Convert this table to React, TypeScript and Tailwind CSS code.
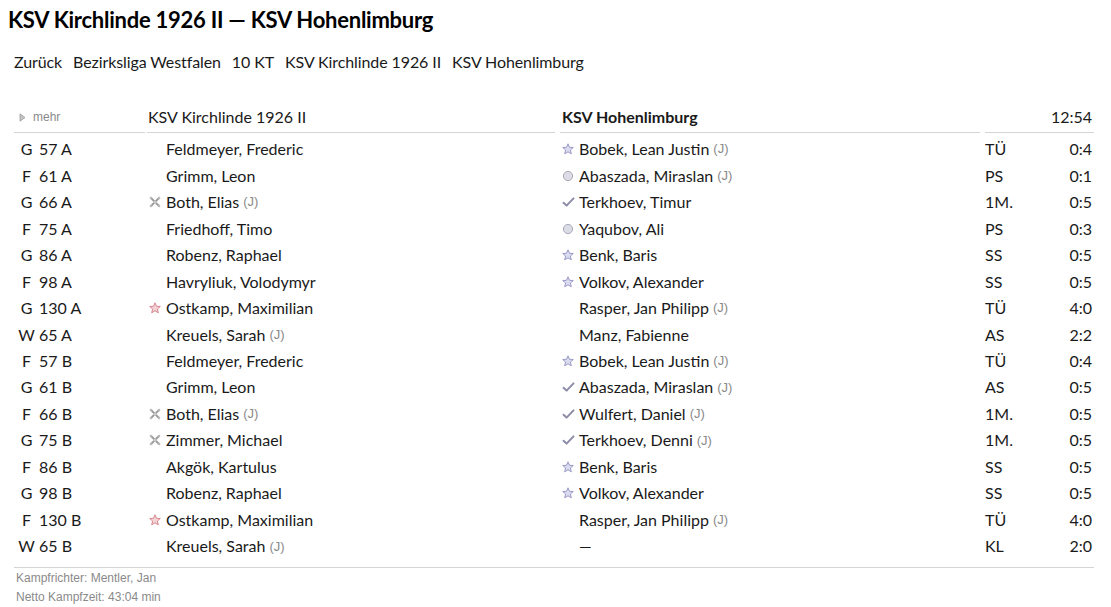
import React from "react";

type Mark = "star" | "starRed" | "circle" | "check" | "cross" | null;

type Bout = {
	style: string;
	weight: string;
	home: string;
	homeJ?: boolean;
	homeMark?: Mark;
	guest: string;
	guestJ?: boolean;
	guestMark?: Mark;
	kind: string;
	score: string;
};

const bouts: Bout[] = [
	{ style: "G", weight: "57 A", home: "Feldmeyer, Frederic", guest: "Bobek, Lean Justin", guestJ: true, guestMark: "star", kind: "TÜ", score: "0:4" },
	{ style: "F", weight: "61 A", home: "Grimm, Leon", guest: "Abaszada, Miraslan", guestJ: true, guestMark: "circle", kind: "PS", score: "0:1" },
	{ style: "G", weight: "66 A", home: "Both, Elias", homeJ: true, homeMark: "cross", guest: "Terkhoev, Timur", guestMark: "check", kind: "1M.", score: "0:5" },
	{ style: "F", weight: "75 A", home: "Friedhoff, Timo", guest: "Yaqubov, Ali", guestMark: "circle", kind: "PS", score: "0:3" },
	{ style: "G", weight: "86 A", home: "Robenz, Raphael", guest: "Benk, Baris", guestMark: "star", kind: "SS", score: "0:5" },
	{ style: "F", weight: "98 A", home: "Havryliuk, Volodymyr", guest: "Volkov, Alexander", guestMark: "star", kind: "SS", score: "0:5" },
	{ style: "G", weight: "130 A", home: "Ostkamp, Maximilian", homeMark: "starRed", guest: "Rasper, Jan Philipp", guestJ: true, kind: "TÜ", score: "4:0" },
	{ style: "W", weight: "65 A", home: "Kreuels, Sarah", homeJ: true, guest: "Manz, Fabienne", kind: "AS", score: "2:2" },
	{ style: "F", weight: "57 B", home: "Feldmeyer, Frederic", guest: "Bobek, Lean Justin", guestJ: true, guestMark: "star", kind: "TÜ", score: "0:4" },
	{ style: "G", weight: "61 B", home: "Grimm, Leon", guest: "Abaszada, Miraslan", guestJ: true, guestMark: "check", kind: "AS", score: "0:5" },
	{ style: "F", weight: "66 B", home: "Both, Elias", homeJ: true, homeMark: "cross", guest: "Wulfert, Daniel", guestJ: true, guestMark: "check", kind: "1M.", score: "0:5" },
	{ style: "G", weight: "75 B", home: "Zimmer, Michael", homeMark: "cross", guest: "Terkhoev, Denni", guestJ: true, guestMark: "check", kind: "1M.", score: "0:5" },
	{ style: "F", weight: "86 B", home: "Akgök, Kartulus", guest: "Benk, Baris", guestMark: "star", kind: "SS", score: "0:5" },
	{ style: "G", weight: "98 B", home: "Robenz, Raphael", guest: "Volkov, Alexander", guestMark: "star", kind: "SS", score: "0:5" },
	{ style: "F", weight: "130 B", home: "Ostkamp, Maximilian", homeMark: "starRed", guest: "Rasper, Jan Philipp", guestJ: true, kind: "TÜ", score: "4:0" },
	{ style: "W", weight: "65 B", home: "Kreuels, Sarah", homeJ: true, guest: "—", kind: "KL", score: "2:0" },
];

const STAR = "M6 0.8 L7.5 4.3 L11.3 4.5 L8.4 7 L9.3 10.8 L6 8.8 L2.7 10.8 L3.6 7 L0.7 4.5 L4.5 4.3 Z";

const MarkIcon = ({ mark }: { mark?: Mark }) => {
	if (!mark) return null;
	if (mark === "star" || mark === "starRed") {
		const red = mark === "starRed";
		return (
			<svg width="12" height="12" viewBox="0 0 12 12">
				<path d={STAR} fill={red ? "#f3d3d6" : "#dcdcf0"} stroke={red ? "#d9868e" : "#9a9ac8"} strokeWidth="1" strokeLinejoin="round" />
			</svg>
		);
	}
	if (mark === "circle") {
		return (
			<svg width="12" height="12" viewBox="0 0 12 12">
				<circle cx="6" cy="6" r="4.6" fill="#dcdce6" stroke="#a8a8b8" strokeWidth="1" />
			</svg>
		);
	}
	if (mark === "check") {
		return (
			<svg width="13" height="12" viewBox="0 0 13 12">
				<path d="M1.5 6.8 L4.6 9.6 L11.5 2.4" fill="none" stroke="#8c8ca8" strokeWidth="2" strokeLinecap="round" strokeLinejoin="round" />
			</svg>
		);
	}
	return (
		<svg width="12" height="12" viewBox="0 0 12 12">
			<path d="M2 2 L10 10 M10 2 L2 10" stroke="#9a9a9a" strokeWidth="1.8" strokeLinecap="round" />
			<circle cx="6" cy="6" r="1.6" fill="#c8c8c8" />
			<circle cx="2" cy="2" r="1.3" fill="#b8b8b8" />
			<circle cx="10" cy="2" r="1.3" fill="#b8b8b8" />
			<circle cx="2" cy="10" r="1.3" fill="#b8b8b8" />
			<circle cx="10" cy="10" r="1.3" fill="#b8b8b8" />
		</svg>
	);
};

const Name = ({ name, junior, mark }: { name: string; junior?: boolean; mark?: Mark }) => (
	<div className="flex items-center">
		<span className="w-[18px] flex justify-start pl-[1px]">
			<MarkIcon mark={mark} />
		</span>
		<span>{name}</span>
		{junior && <span className="ml-[4px] text-[13px] text-[#8a8a8a] font-['Liberation_Sans',sans-serif]">(J)</span>}
	</div>
);

export default function App() {
	return (
		<div className="w-[1111px] h-[607px] bg-white text-[#1a1a1a] font-['Lato','Open_Sans',sans-serif] overflow-hidden">
			<h1 className="pl-[8px] pt-[5px] h-[38px] text-[22px] font-bold text-black leading-[30px] tracking-[-0.25px]">
				KSV Kirchlinde 1926 II — KSV Hohenlimburg
			</h1>
			<nav className="flex gap-[11px] pl-[14px] pt-[13px] text-[16px] leading-[22px] tracking-[-0.1px]">
				<span>Zurück</span>
				<span>Bezirksliga Westfalen</span>
				<span>10 KT</span>
				<span>KSV Kirchlinde 1926 II</span>
				<span>KSV Hohenlimburg</span>
			</nav>

			<div className="ml-[14px] mt-[29px] w-[1080px] text-[16px]">
				<div className="flex h-[31px] items-center">
					<div className="w-[131px] h-full flex items-center gap-[7px] border-b border-[#d4d4d4] pl-[5px] text-[12px] text-[#8a8a8a] font-['Liberation_Sans',sans-serif]">
						<svg width="7" height="9" viewBox="0 0 7 9">
							<path d="M1 0.8 L6 4.5 L1 8.2 Z" fill="#c4c4c4" stroke="#9a9a9a" strokeWidth="0.8" />
						</svg>
						<span>mehr</span>
					</div>
					<div className="ml-[2px] w-[408px] h-full flex items-center border-b border-[#d4d4d4] pl-[1px]">KSV Kirchlinde 1926 II</div>
					<div className="ml-[5px] w-[420px] h-full flex items-center border-b border-[#d4d4d4] pl-[2px] font-bold">KSV Hohenlimburg</div>
					<div className="ml-[5px] w-[109px] h-full flex items-center justify-end border-b border-[#d4d4d4] pr-[2px]">12:54</div>
				</div>
				<div className="pt-[3px]">
					{bouts.map((b, i) => (
						<div key={i} className="flex h-[26.47px] items-center">
							<div className="w-[131px] flex items-center">
								<span className="w-[25px] text-center">{b.style}</span>
								<span>{b.weight}</span>
							</div>
							<div className="ml-[2px] w-[408px] pl-[1px]">
								<Name name={b.home} junior={b.homeJ} mark={b.homeMark} />
							</div>
							<div className="ml-[5px] w-[420px] pl-[1px]">
								<Name name={b.guest} junior={b.guestJ} mark={b.guestMark} />
							</div>
							<div className="ml-[5px] w-[109px] flex justify-between pr-[2px]">
								<span>{b.kind}</span>
								<span>{b.score}</span>
							</div>
						</div>
					))}
				</div>
				<div className="mt-[7px] border-t border-[#d4d4d4] pt-[1px] pl-[2px] text-[12px] leading-[19px] text-[#8a8a8a] font-['Liberation_Sans',sans-serif]">
					<div>Kampfrichter: Mentler, Jan</div>
					<div>Netto Kampfzeit: 43:04 min</div>
				</div>
			</div>
		</div>
	);
}
